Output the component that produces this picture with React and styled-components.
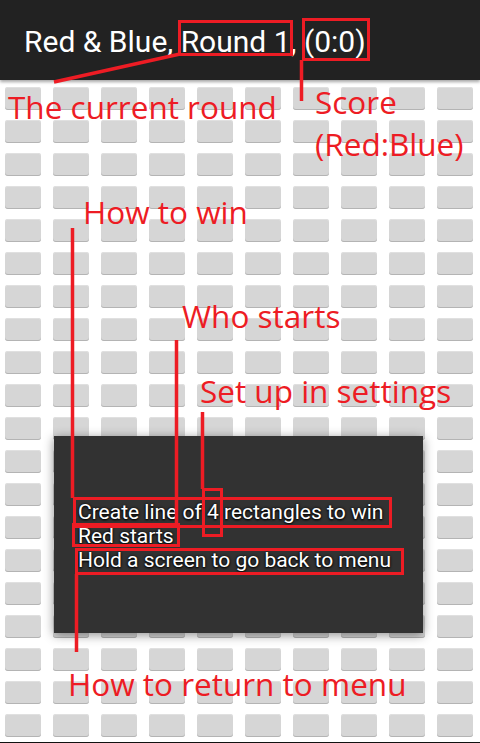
import styled, { createGlobalStyle } from 'styled-components';

const GlobalStyle = createGlobalStyle`
    html, body {
        margin: 0;
        padding: 0;
        background: #ffffff;
    }
`;

const Screen = styled.div`
    position: relative;
    width: 480px;
    height: 743px;
    overflow: hidden;
    background: #ffffff;
    border-bottom: 1px solid #111;
    box-sizing: border-box;
`;

const Header = styled.div`
    position: relative;
    z-index: 2;
    height: 80px;
    display: flex;
    align-items: center;
    padding-left: 24px;
    background: #222222;
    box-shadow: 0 2px 3px rgba(0, 0, 0, 0.35);
`;

const Title = styled.span`
    font-family: Roboto, 'Noto Sans', sans-serif;
    font-size: 30px;
    color: #ffffff;
    margin-top: 2px;
`;

const Board = styled.div`
    display: grid;
    grid-template-columns: repeat(10, 36px);
    grid-auto-rows: 23px;
    column-gap: 12px;
    row-gap: 10px;
    padding: 7px 0 0 5px;
`;

const Cell = styled.div`
    background: #d6d6d6;
    border-radius: 3px;
    box-shadow: inset 0 -1px 0 #b4b4b4, inset 0 1px 0 #e0e0e0;
`;

const Dialog = styled.div`
    position: absolute;
    z-index: 3;
    left: 54px;
    top: 436px;
    width: 369px;
    height: 197px;
    background: #323232;
    box-shadow: 0 2px 10px rgba(0, 0, 0, 0.45);
    display: flex;
    flex-direction: column;
    justify-content: center;
    padding: 2px 0 0 24px;
    box-sizing: border-box;
`;

const Line = styled.div`
    font-family: Roboto, 'Noto Sans', sans-serif;
    font-size: 21px;
    line-height: 24px;
    color: #ffffff;
    text-shadow: 0 0 3px #000, 0 1px 2px #000;
`;

const Overlay = styled.svg`
    position: absolute;
    z-index: 4;
    left: 0;
    top: 0;
    pointer-events: none;
`;

const Label = styled.span`
    position: absolute;
    z-index: 5;
    left: ${(p) => p.$x}px;
    top: ${(p) => p.$y}px;
    font-family: 'Open Sans', 'Noto Sans', sans-serif;
    font-size: 31.5px;
    line-height: 31.5px;
    color: #ed1c24;
    white-space: nowrap;
`;

const RED = '#ed1c24';

const boxes = [
    [179.5, 21.5, 112, 33],
    [303.5, 19.5, 65, 40],
    [74.5, 498.5, 316, 28],
    [203.5, 489.5, 18, 46],
    [73.5, 524.5, 105, 21],
    [76.5, 549.5, 326, 24],
];

const lines = [
    [180, 54, 54, 82],
    [301.5, 60, 301.5, 101],
    [72.5, 228, 72.5, 498],
    [176.5, 340, 176.5, 525],
    [202.5, 412, 202.5, 489],
    [76.5, 574, 76.5, 652],
];

const labels = [
    { text: 'The current round', x: 8, y: 91 },
    { text: 'Score', x: 315, y: 86 },
    { text: '(Red:Blue)', x: 315, y: 128 },
    { text: 'How to win', x: 83, y: 196 },
    { text: 'Who starts', x: 182, y: 300 },
    { text: 'Set up in settings', x: 200, y: 375 },
    { text: 'How to return to menu', x: 68, y: 668 },
];

const App = () => {
    const cells = Array.from({ length: 200 });

    return (
        <Screen>
            <GlobalStyle />
            <Header>
                <Title>Red &amp; Blue, Round 1, (0:0)</Title>
            </Header>
            <Board>
                {cells.map((_, i) => (
                    <Cell key={i} />
                ))}
            </Board>
            <Dialog>
                <Line>Create line of 4 rectangles to win</Line>
                <Line>Red starts</Line>
                <Line>Hold a screen to go back to menu</Line>
            </Dialog>
            <Overlay width='480' height='743'>
                {boxes.map(([x, y, w, h], i) => (
                    <rect key={i} x={x} y={y} width={w} height={h} fill='none' stroke={RED} strokeWidth='3' />
                ))}
                {lines.map(([x1, y1, x2, y2], i) => (
                    <line key={i} x1={x1} y1={y1} x2={x2} y2={y2} stroke={RED} strokeWidth='3.5' />
                ))}
            </Overlay>
            {labels.map((l) => (
                <Label key={l.text} $x={l.x} $y={l.y}>
                    {l.text}
                </Label>
            ))}
        </Screen>
    );
};

export default App;
